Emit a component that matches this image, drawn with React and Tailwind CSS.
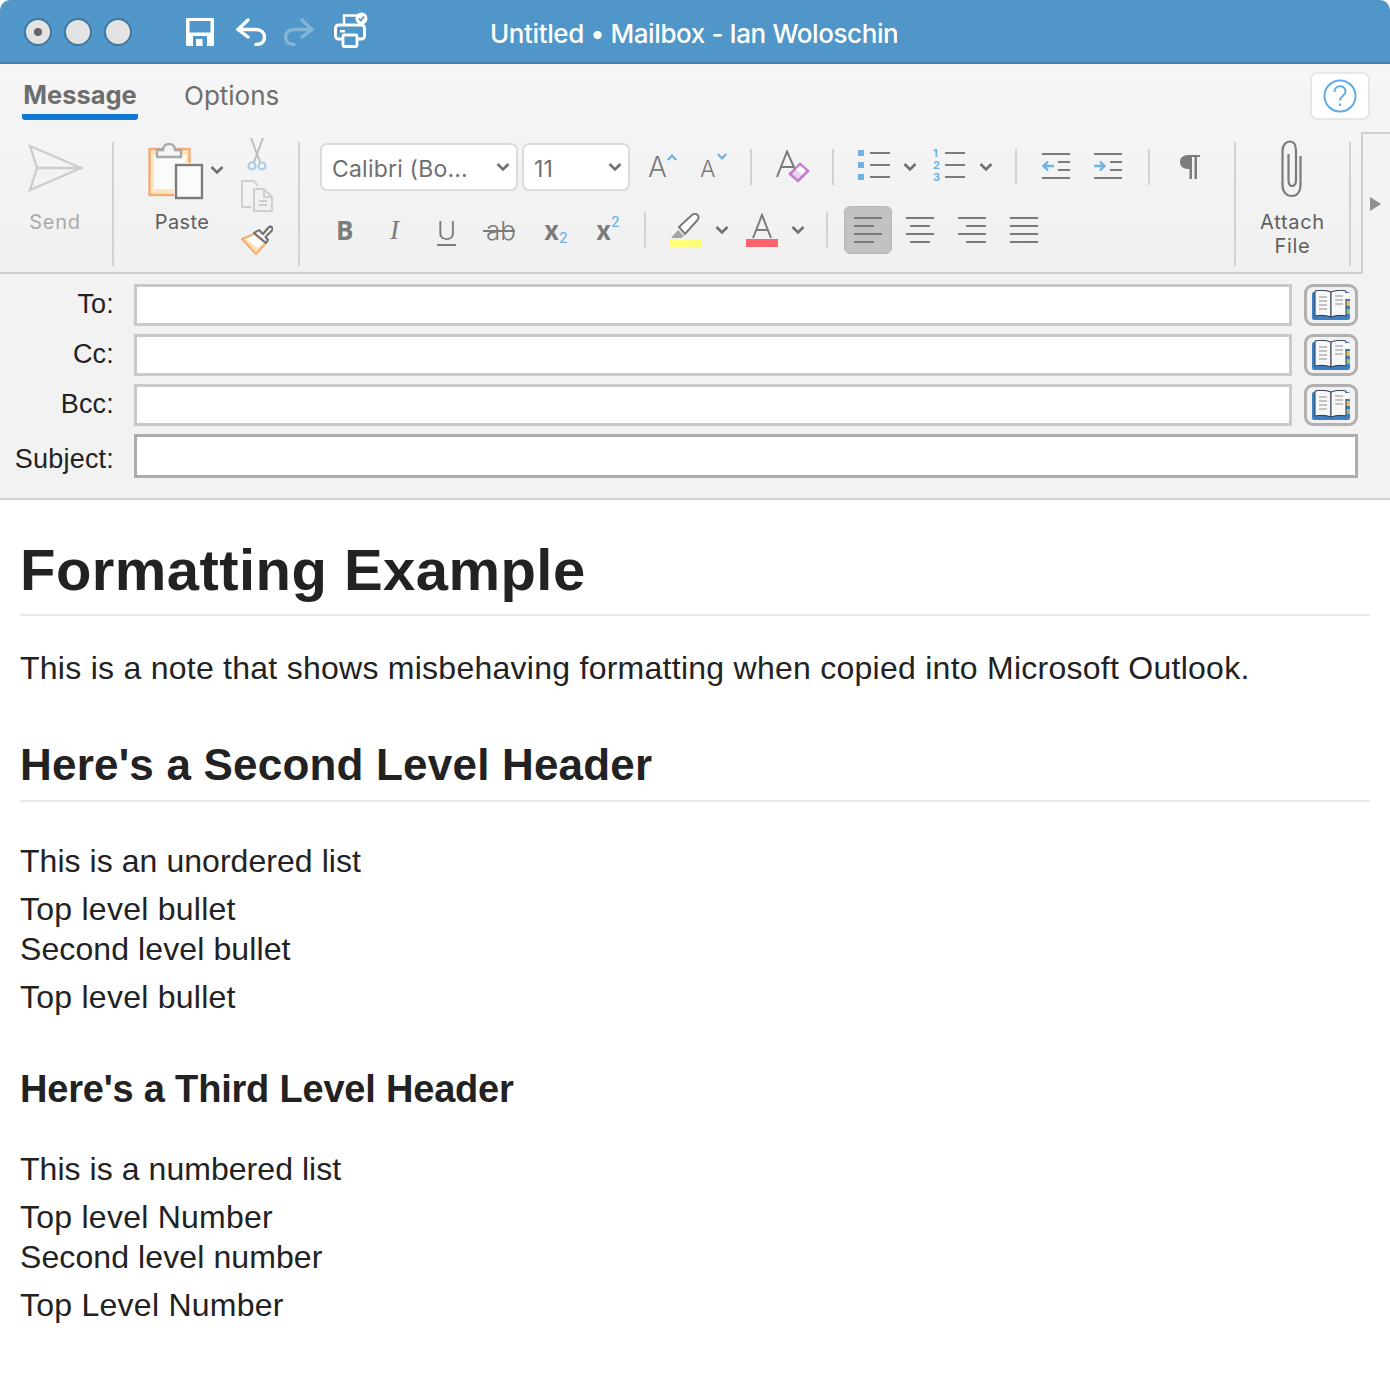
import React from "react";

const Chevron = ({ className = "" }) => (
  <svg width="14" height="10" viewBox="0 0 14 10" className={className} fill="none" stroke="#6f6f6f" strokeWidth="2.6">
    <path d="M1.5 2 L7 7.5 L12.5 2" />
  </svg>
);

const VDivider = ({ className = "" }) => <div className={`w-[2px] bg-[#d2d2d2] ${className}`} />;

const SaveIcon = () => (
  <svg width="28" height="28" viewBox="0 0 28 28" fill="none">
    <path fillRule="evenodd" fill="#fff" d="M1 0H27a1 1 0 0 1 1 1V27a1 1 0 0 1-1 1H1a1 1 0 0 1-1-1V1a1 1 0 0 1 1-1ZM3.500 3V14.500H24.500V3Z" />
    <rect x="7" y="18" width="14" height="10" fill="#5096c8" />
    <rect x="10" y="21" width="6.500" height="7" fill="#fff" />
  </svg>
);

const ArrowIcon = ({ flip = false, color = "#fff" }) => (
  <svg width="30" height="28" viewBox="0 0 30 28" fill="none" stroke={color} strokeWidth="3.400" strokeLinecap="round" strokeLinejoin="round" className={flip ? "-scale-x-100" : ""}>
    <path d="M12 2 L2 11.500 L12 19" />
    <path d="M2 11.500 H19 C25 11.500 28.500 14.500 28.500 19 C28.500 23.500 25.500 26.500 20 26.500" />
  </svg>
);

const PrinterIcon = () => (
  <svg width="34" height="36" viewBox="0 0 34 36" fill="none">
    <path d="M10 13 V3.500 H23" stroke="#fff" strokeWidth="2.500" />
    <rect x="1.500" y="13" width="29" height="14" rx="3" stroke="#fff" strokeWidth="3" />
    <rect x="6" y="18" width="5" height="2.500" fill="#fff" />
    <rect x="9" y="23" width="14" height="11.500" rx="1" fill="#5096c8" stroke="#fff" strokeWidth="2.800" />
    <circle cx="27.500" cy="6.500" r="6" fill="#fff" />
    <path d="M24.800 6.500 L26.800 8.600 L30.300 4.500" stroke="#5096c8" strokeWidth="1.700" />
  </svg>
);

const SendIcon = () => (
  <svg width="56" height="48" viewBox="0 0 56 48" fill="none" stroke="#cdcdcd" strokeWidth="2.400">
    <path d="M2 2 L53 24 L2 46 L9 24 Z" />
    <path d="M9 24 H53" />
  </svg>
);

const PasteIcon = () => (
  <svg width="58" height="62" viewBox="0 0 58 62" fill="none">
    <rect x="1.500" y="10" width="40" height="46" fill="#fde5bb" stroke="#f3ab74" strokeWidth="2.400" />
    <rect x="6" y="16" width="32" height="34" fill="#fbfbfb" />
    <path d="M9 18 V11 H15 C15 3 27 3 27 11 H33 V18 Z" fill="#f4f4f4" stroke="#a9a9a9" strokeWidth="2.400" />
    <rect x="26" y="24" width="30" height="36" fill="#fbfbfb" />
    <rect x="28" y="26" width="26" height="33" fill="#fbfbfb" stroke="#7c7c7c" strokeWidth="2.400" />
  </svg>
);

const ScissorsIcon = () => (
  <svg width="20" height="34" viewBox="0 0 20 34" fill="none">
    <path d="M4 0 L13 24 M16 0 L7 24" stroke="#bdbdbd" strokeWidth="2" />
    <circle cx="5" cy="28" r="3.500" stroke="#a9cfe8" strokeWidth="2.200" />
    <circle cx="15" cy="28" r="3.500" stroke="#a9cfe8" strokeWidth="2.200" />
  </svg>
);

const CopyIcon = () => (
  <svg width="32" height="32" viewBox="0 0 32 32" fill="none" stroke="#cfcfcf" strokeWidth="2">
    <path d="M10 27 H1 V1 H13 L17 6" />
    <path d="M13 9 H23 L31 17 V31 H13 Z" fill="#f1f1f1" />
    <path d="M23 9 V17 H31" />
    <path d="M18 21 H26 M18 25 H26" />
  </svg>
);

const BrushIcon = () => (
  <svg width="32" height="30" viewBox="0 0 32 30" fill="none">
    <path d="M1 14 L13 9 L24 19 L15 29 Z" fill="#fde1b5" stroke="#f3ab74" strokeWidth="2" />
    <path d="M5 14 L13 10 L23 18 L17 23 Z" fill="#fff" />
    <path d="M13 8 L18 5 L22 9 L27.500 2.500 Q29.500 .8 31 2.500 Q32.500 4.200 30.500 6 L24.500 12 L27 15 L25 18 Z" fill="#f4f4f4" stroke="#6f6f6f" strokeWidth="2" strokeLinejoin="round" />
  </svg>
);

const LetterA = ({ size = 28, color = "#7b7b7b" }) => (
  <span className="font-['Inter',sans-serif] font-light leading-none" style={{ fontSize: size, color }}>A</span>
);

const Caret = ({ up = false }) => (
  <svg width="10" height="7" viewBox="0 0 10 7" fill="none" stroke="#6db3e3" strokeWidth="2.200">
    <path d={up ? "M.8 6 L5 1.500 L9.200 6" : "M.8 1 L5 5.500 L9.200 1"} />
  </svg>
);

const ClearIcon = () => (
  <svg width="34" height="34" viewBox="0 0 34 34" fill="none">
    <path d="M1 27 L11 1.500 L21 24 M5 17 H17" stroke="#7b7b7b" strokeWidth="2" />
    <path d="M14 24 L24 14 L32 21 L22 31 Z" fill="#e8d4ea" stroke="#c07fc8" strokeWidth="2.600" />
    <path d="M20 19.500 L24 15.500 L30 20.500 L26 24.500 Z" fill="#fff" />
  </svg>
);

const ListIcon = ({ numbered = false }) => (
  <div className="w-[32px] h-[36px] grid grid-cols-[12px_20px] grid-rows-[12px_12px_12px] items-center">
    {[1, 2, 3].map((n) => (
      <React.Fragment key={n}>
        {numbered ? (
          <span className="text-[#6db3e3] text-[11px] font-bold leading-none font-['Inter',sans-serif]">{n}</span>
        ) : (
          <span className="w-[6px] h-[6px] bg-[#6db3e3]" />
        )}
        <span className="h-[2px] bg-[#7b7b7b]" />
      </React.Fragment>
    ))}
  </div>
);

const IndentIcon = ({ out = false }) => (
  <svg width="28" height="28" viewBox="0 0 28 28" fill="none">
    <path d="M0 2 H28 M16 10 H28 M16 18 H28 M0 26 H28" stroke="#7b7b7b" strokeWidth="2" />
    {out ? (
      <path d="M12 14 H2 M6 9.500 L1.500 14 L6 18.500" stroke="#6db3e3" strokeWidth="2.400" />
    ) : (
      <path d="M0 14 H10 M6 9.500 L10.500 14 L6 18.500" stroke="#6db3e3" strokeWidth="2.400" />
    )}
  </svg>
);

const PilcrowIcon = () => (
  <svg width="20" height="26" viewBox="0 0 20 26" fill="none">
    <path d="M8 1 H20 V3 H17 V25 H14.500 V3 H12 V25 H9.500 V15 H8 C3 15 0 12 0 8 C0 4 3 1 8 1 Z" fill="#7b7b7b" />
  </svg>
);

const HighlightIcon = () => (
  <div className="w-[32px] flex flex-col">
    <svg width="32" height="26" viewBox="0 0 32 26" fill="none">
      <path d="M2 25 L9 17 L15 23 L12 25 Z" fill="#a5a5a5" />
      <path d="M10 14 L23 2 C25 0.500 27 0.500 28.500 2 C30 3.500 30 5 28.500 7 L16 21 Z" fill="#fff" stroke="#7b7b7b" strokeWidth="2" />
    </svg>
    <div className="h-[8px] bg-[#ffff78]" />
  </div>
);

const FontColorIcon = () => (
  <div className="w-[32px] flex flex-col items-center">
    <svg width="22" height="26" viewBox="0 0 22 26" fill="none" stroke="#7b7b7b" strokeWidth="2">
      <path d="M2 25 L11 2 L20 25 M5.500 17 H16.500" />
    </svg>
    <div className="w-full h-[8px] bg-[#ff636b]" />
  </div>
);

const AlignIcon = ({ rows }) => (
  <svg width="28" height="28" viewBox="0 0 28 28" fill="none" stroke="#7b7b7b" strokeWidth="2">
    {rows.map(([a, b], i) => (
      <path key={i} d={`M${a} ${2 + i * 8} H${b}`} />
    ))}
  </svg>
);

const PaperclipIcon = () => (
  <svg width="22" height="58" viewBox="0 0 22 58" fill="none" stroke="#7b7b7b" strokeWidth="2.200">
    <path d="M19.500 16 V45 C19.500 52 16 56 11 56 C5.500 56 1.500 52 1.500 45 V11 C1.500 5 5 1.500 9 1.500 C13 1.500 15 5 15 11 V40 C15 44 13.500 46 11 46 C8.500 46 7.500 44 7.500 40 V14" />
  </svg>
);

const BookIcon = () => (
  <svg width="38" height="30" viewBox="0 0 38 30" fill="none">
    <rect x="0" y="2" width="38" height="28" rx="2" fill="#3d7fc1" />
    <rect x="34" y="11" width="4" height="5" fill="#f2c144" />
    <rect x="34" y="19" width="4" height="5" fill="#98bf7e" />
    <path d="M3 1 C8 0 14 0 19 2 V27 C14 25 8 25 3 26 Z" fill="#f8f8f8" stroke="#2a3a52" strokeWidth="1" />
    <path d="M19 2 C24 0 30 0 34 1 V26 C30 25 24 25 19 27 Z" fill="#f8f8f8" stroke="#2a3a52" strokeWidth="1" />
    <path d="M7 7 H15 M7 11 H15 M7 15 H15 M7 19 H15 M23 6 H31 M23 10 H31 M23 14 H31" stroke="#c4c4c4" strokeWidth="2" />
    <rect x="33" y="3" width="5" height="6" rx="1" fill="#fff" />
  </svg>
);

const Select = ({ label, className }) => (
  <div className={`h-[48px] bg-white border-2 border-[#dcdcdc] rounded-[7px] flex items-center justify-between pl-[10px] pr-[6px] ${className}`}>
    <span className="text-[23px] pt-[5px] text-[#6f6f6f] font-['Inter',sans-serif] tracking-[0.2px]">{label}</span>
    <Chevron />
  </div>
);

const FormRow = ({ label }) => (
  <div className="flex items-center h-[42px]">
    <label className="w-[114px] text-right text-[27px] tracking-[0.2px] pb-[2px] text-[#222]">{label}</label>
    <div className="ml-[20px] w-[1158px] h-full bg-white border-[3px] border-[#c9c9c9]" />
    <button className="ml-[12px] w-[54px] h-full rounded-[9px] border-[3px] border-[#b0b0b0] bg-[#f1f1f1] flex items-center justify-center">
      <BookIcon />
    </button>
  </div>
);

const App = () => {
  return (
    <div className="w-[1390px] h-[1396px] bg-white font-['Liberation_Sans',sans-serif] text-[#222] overflow-hidden">
      {/* Title bar */}
      <div className="relative h-[64px] pt-[2px] bg-[#5096c8] border-b-2 border-[#4680aa] rounded-t-[10px] flex items-center text-white">
        <div className="ml-[24px] flex gap-[12px]">
          {[true, false, false].map((dot, i) => (
            <div key={i} className="w-[28px] h-[28px] rounded-full bg-[#e3e3e3] border-2 border-[#41789f] flex items-center justify-center">
              {dot && <div className="w-[8px] h-[8px] rounded-full bg-[#666]" />}
            </div>
          ))}
        </div>
        <div className="ml-[54px]"><SaveIcon /></div>
        <div className="ml-[22px]"><ArrowIcon /></div>
        <div className="ml-[18px]"><ArrowIcon flip color="#84b5d9" /></div>
        <div className="ml-[20px] mb-[4px]"><PrinterIcon /></div>
        <div className="ml-[122px] mt-[3px] text-[26px] tracking-[-0.4px] leading-none font-medium font-['Inter',sans-serif]">Untitled • Mailbox - Ian Woloschin</div>
      </div>

      {/* Tabs */}
      <div className="bg-gradient-to-b from-[#f6f6f6] to-[#f0f0f0]">
        <div className="h-[68px] flex items-start relative font-['Inter',sans-serif] text-[#6e6e6e]">
          <div className="ml-[22px] h-[56px] w-[116px] border-b-[6px] border-[#1177d7] rounded-b-[3px] flex items-center justify-center text-[25.500px] font-bold pt-[12px]">Message</div>
          <div className="ml-[46px] h-[56px] flex items-center text-[26px] pt-[6px]">Options</div>
          <div className="ml-auto mr-[20px] mt-[8px] w-[60px] h-[48px] bg-white border-2 border-[#e6e6e6] rounded-[7px] flex items-center justify-center">
            <svg width="34" height="34" viewBox="0 0 34 34" fill="none" stroke="#62ace6" strokeWidth="2">
              <circle cx="17" cy="17" r="15.500" />
              <path d="M11.500 13 C11.500 5.500 22.500 5.500 22.500 12.500 C22.500 17 17 16.500 17 21.500" />
              <path d="M17 24.500 V27" />
            </svg>
          </div>
        </div>

        {/* Ribbon */}
        <div className="flex h-[142px] items-stretch font-['Inter',sans-serif]">
          <div className="w-[1361px] border-b-2 border-[#cfcfcf] flex items-start">
            {/* Send */}
            <div className="w-[112px] flex flex-col items-center">
              <div className="mt-[12px]"><SendIcon /></div>
              <span className="mt-[18px] ml-[-2px] text-[20px] text-[#a9a9a9] tracking-[0.7px] leading-[24px]">Send</span>
            </div>
            <VDivider className="mt-[10px] h-[124px]" />

            {/* Clipboard */}
            <div className="w-[184px] relative flex">
              <div className="ml-[34px] mt-[7px] flex flex-col items-center">
                <div className="flex items-start">
                  <PasteIcon />
                  <Chevron className="ml-[4px] mt-[26px]" />
                </div>
                <span className="mt-[9px] ml-[-8px] text-[20px] text-[#5f5f5f] tracking-[0.4px] leading-[24px]">Paste</span>
              </div>
              <div className="ml-[17px] mt-[6px] flex flex-col items-center">
                <ScissorsIcon />
                <div className="mt-[8px]"><CopyIcon /></div>
                <div className="mt-[13px]"><BrushIcon /></div>
              </div>
            </div>
            <VDivider className="mt-[10px] h-[124px]" />

            {/* Formatting */}
            <div className="w-[934px] flex flex-col">
              <div className="h-[48px] mt-[11px] flex items-center">
                <Select label="Calibri (Bo..." className="ml-[20px] w-[198px]" />
                <Select label="11" className="ml-[4px] w-[108px]" />
                <div className="ml-[18px] w-[28px] flex items-start"><LetterA size={28} /><span className="mt-[1px]"><Caret up /></span></div>
                <div className="ml-[24px] w-[28px] flex items-start"><span className="mt-[6px]"><LetterA size={23} /></span><span className="mt-[1px] ml-[1px]"><Caret /></span></div>
                <VDivider className="ml-[22px] h-[36px]" />
                <div className="ml-[24px]"><ClearIcon /></div>
                <VDivider className="ml-[22px] h-[36px]" />
                <div className="ml-[24px] mb-[4px]"><ListIcon /></div>
                <Chevron className="ml-[13px]" />
                <div className="ml-[16px] mb-[4px]"><ListIcon numbered /></div>
                <Chevron className="ml-[14px]" />
                <VDivider className="ml-[22px] h-[36px]" />
                <div className="ml-[25px] mb-[3px]"><IndentIcon out /></div>
                <div className="ml-[24px] mb-[3px]"><IndentIcon /></div>
                <VDivider className="ml-[26px] h-[36px]" />
                <div className="ml-[30px]"><PilcrowIcon /></div>
              </div>
              <div className="h-[48px] mt-[15px] flex items-center text-[#7b7b7b]">
                <span className="ml-[36px] w-[54px] text-[26px] font-bold font-['Open_Sans',sans-serif]">B</span>
                <span className="w-[47px] text-[27px] italic font-['Liberation_Serif',serif]">I</span>
                <span className="w-[46px] text-[26px] font-light underline underline-offset-4">U</span>
                <span className="relative w-[61px] text-[26px] font-light">
                  <span className="ml-[3px]">ab</span>
                  <span className="absolute left-0 top-[19px] w-[32px] h-[2px] bg-[#7b7b7b]" />
                </span>
                <span className="w-[52px] text-[26px] font-bold">x<sub className="text-[#6db3e3] text-[14px] font-medium top-[3px]">2</sub></span>
                <span className="w-[48px] text-[26px] font-bold">x<sup className="text-[#6db3e3] text-[14px] font-medium top-[-13px]">2</sup></span>
                <VDivider className="h-[36px]" />
                <div className="ml-[23px]"><HighlightIcon /></div>
                <Chevron className="ml-[14px]" />
                <div className="ml-[17px]"><FontColorIcon /></div>
                <Chevron className="ml-[13px]" />
                <VDivider className="ml-[21px] h-[36px]" />
                <div className="ml-[16px] w-[48px] h-[48px] rounded-[6px] bg-[#c2c2c2] border border-[#b8b8b8] flex items-center justify-center">
                  <AlignIcon rows={[[0, 28], [0, 20], [0, 28], [0, 20]]} />
                </div>
                <div className="ml-[14px]"><AlignIcon rows={[[0, 28], [4, 24], [0, 28], [4, 24]]} /></div>
                <div className="ml-[24px]"><AlignIcon rows={[[0, 28], [8, 28], [0, 28], [8, 28]]} /></div>
                <div className="ml-[24px]"><AlignIcon rows={[[0, 28], [0, 28], [0, 28], [0, 28]]} /></div>
              </div>
            </div>
            <VDivider className="mt-[10px] h-[124px]" />

            {/* Attach */}
            <div className="w-[113px] flex flex-col items-center">
              <div className="mt-[8px] mr-[2px]"><PaperclipIcon /></div>
              <span className="mt-[12px] text-[20px] text-[#5f5f5f] tracking-[0.7px] leading-[24px] text-center">Attach<br />File</span>
            </div>
            <VDivider className="mt-[10px] h-[124px]" />
          </div>
          {/* Collapse tab */}
          <div className="flex-1 bg-[#f3f3f3] border-l-2 border-t-2 border-[#cfcfcf] flex items-center justify-center">
            <div className="mr-[3px] w-0 h-0 border-y-[7px] border-y-transparent border-l-[11px] border-l-[#8f8f8f]" />
          </div>
        </div>
      </div>

      {/* Address form */}
      <div className="h-[226px] bg-[#f2f2f2] border-b-2 border-[#cfcfcf] pt-[10px] flex flex-col gap-[8px]">
        <FormRow label="To:" />
        <FormRow label="Cc:" />
        <FormRow label="Bcc:" />
        <div className="flex items-center h-[44px]">
          <label className="w-[114px] text-right text-[27px] tracking-[0.2px] pt-[6px] text-[#222]">Subject:</label>
          <div className="ml-[20px] w-[1224px] h-full bg-white border-[3px] border-[#adadad]" />
        </div>
      </div>

      {/* Body */}
      <div className="px-[20px] pt-[38px]">
        <h1 className="text-[58px] tracking-[0.45px] leading-[64px] font-bold pb-[12px] border-b-2 border-[#e8e8e8]">Formatting Example</h1>
        <p className="mt-[32px] text-[32px] tracking-[0.26px] leading-[40px]">This is a note that shows misbehaving formatting when copied into Microsoft Outlook.</p>
        <h2 className="mt-[49px] text-[44px] tracking-[0.2px] leading-[56px] font-bold pb-[7px] border-b-2 border-[#e8e8e8]">Here's a Second Level Header</h2>
        <p className="mt-[39px] text-[32px] tracking-[0.05px] leading-[40px]">This is an unordered list</p>
        <ul className="text-[32px] leading-[40px]">
          <li className="mt-[8px] tracking-[0.25px]">Top level bullet</li>
          <li className="tracking-[0.1px]">Second level bullet</li>
          <li className="mt-[8px] tracking-[0.25px]">Top level bullet</li>
        </ul>
        <h3 className="mt-[44px] text-[38px] tracking-[-0.2px] leading-[56px] font-bold">Here's a Third Level Header</h3>
        <p className="mt-[32px] text-[32px] tracking-[0.05px] leading-[40px]">This is a numbered list</p>
        <ol className="text-[32px] leading-[40px]">
          <li className="mt-[8px] tracking-[0.25px]">Top level Number</li>
          <li className="tracking-[0.1px]">Second level number</li>
          <li className="mt-[8px] tracking-[0.25px]">Top Level Number</li>
        </ol>
      </div>
    </div>
  );
};

export default App;
